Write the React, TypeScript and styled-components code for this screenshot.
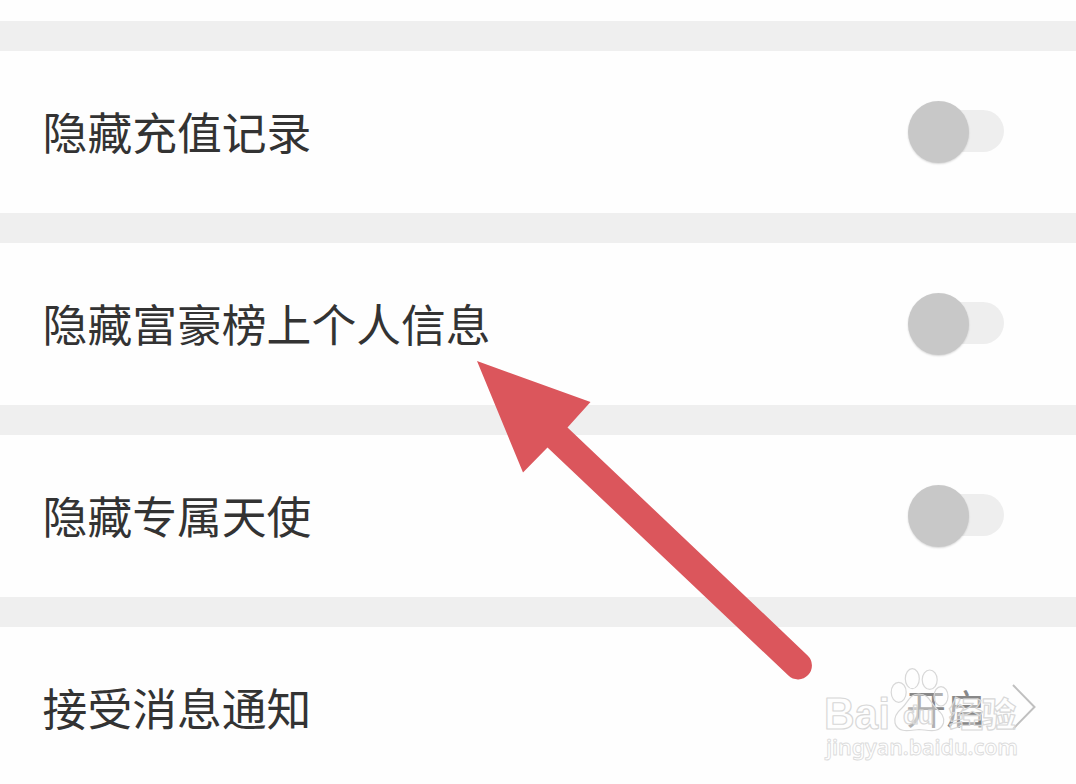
import styled, { createGlobalStyle } from "styled-components";

const settings = [
  "隐藏充值记录",
  "隐藏富豪榜上个人信息",
  "隐藏专属天使",
];

export default function App() {
  return (
    <Page>
      <GlobalStyle />
      <List>
        {settings.map((label) => (
          <Row key={label}>
            <Label>{label}</Label>
            <Switch type="button" role="switch" aria-checked={false}>
              <Thumb />
            </Switch>
          </Row>
        ))}
        <Row>
          <Label>接受消息通知</Label>
          <Value>
            <span>开启</span>
            <Chevron />
          </Value>
        </Row>
      </List>
      <Arrow />
      <Watermark />
    </Page>
  );
}

function Chevron() {
  return (
    <svg width="24" height="48" viewBox="0 0 24 48" fill="none">
      <path d="M1 2 L22.500 24 L1 46" stroke="#c0c0c0" strokeWidth="2" />
    </svg>
  );
}

function Arrow() {
  return (
    <Overlay viewBox="0 0 1076 784">
      <path
        d="M477 361 L590.500 402 L567.500 427.500 L807.600 655.400 A13.900 13.900 0 0 1 788.400 675.600 L547.500 447.500 L523 472.500 Z"
        fill="#db565c"
      />
    </Overlay>
  );
}

function Watermark() {
  return (
    <Overlay viewBox="0 0 1076 784">
      <Mark>
        <Latin x="824" y="728.500" fontSize="44" textLength="66" lengthAdjust="spacingAndGlyphs">
          Bai
        </Latin>
        <ellipse cx="898.700" cy="692.300" rx="7.500" ry="10" />
        <ellipse cx="912.300" cy="678.700" rx="7" ry="10" />
        <ellipse cx="929.700" cy="679.700" rx="7.500" ry="9.700" />
        <ellipse cx="941" cy="696.300" rx="7" ry="9.700" />
        <path d="M918.500 694 C909 694 908 703 902 708 C896 713 894 718 895 723 C898 734 911 730 919 729.500 C928 730 940 734 943.500 723 C945 716 940 712 936 708 C930 702 929 694 918.500 694 Z" />
        <Latin x="903" y="724" fontSize="26" textLength="31">
          du
        </Latin>
        <text x="949" y="726.500" fontSize="34" fontWeight="900" textLength="67">
          经验
        </text>
        <Url x="826" y="754.500" fontSize="21.500" textLength="192">
          jingyan.baidu.com
        </Url>
      </Mark>
    </Overlay>
  );
}

// Style
const GlobalStyle = createGlobalStyle`
  * {
    box-sizing: border-box;
  }

  body {
    margin: 0;
    background-color: #fefefe;
    font-family: "Noto Sans CJK SC", sans-serif;
  }
`;

const Page = styled.main`
  position: relative;
  width: 1076px;
  height: 784px;
  overflow: hidden;
`;

const List = styled.div`
  display: flex;
  flex-direction: column;
  padding-top: 20.6px;
`;

const Row = styled.div`
  display: flex;
  align-items: center;
  justify-content: space-between;
  height: 192px;
  padding: 0 72px 2px 42.6px;
  border-top: 30px solid #efefef;
`;

const Label = styled.span`
  font-size: 44.8px;
  line-height: 60px;
  color: #333333;
`;

const Switch = styled.button`
  display: flex;
  align-items: center;
  width: 80px;
  height: 42px;
  padding: 0;
  border: none;
  border-radius: 21px;
  background-color: #eeeeee;
`;

const Thumb = styled.span`
  flex-shrink: 0;
  width: 61px;
  height: 62px;
  margin: 2px 0 0 -16px;
  border-radius: 50%;
  background-color: #c8c8c8;
  box-shadow: 0 1px 2px rgba(0, 0, 0, 0.16);
`;

const Value = styled.div`
  display: flex;
  align-items: center;
  gap: 26px;
  margin-right: -32px;
  font-size: 40px;
  line-height: 60px;
  color: #888888;
`;

const Overlay = styled.svg`
  position: absolute;
  inset: 0;
  width: 1076px;
  height: 784px;
  pointer-events: none;
`;

const Mark = styled.g`
  fill: rgba(255, 255, 255, 0.35);
  stroke: #d8d8d8;
  stroke-width: 1.2px;
  stroke-linejoin: round;
  font-family: "Noto Sans", "Noto Sans CJK SC", sans-serif;
`;

const Latin = styled.text`
  font-family: "Liberation Sans", sans-serif;
  font-weight: 700;
`;

const Url = styled.text`
  fill: #ffffff;
  stroke: #dcdcdc;
  stroke-width: 0.9px;
  font-weight: 600;
`;
